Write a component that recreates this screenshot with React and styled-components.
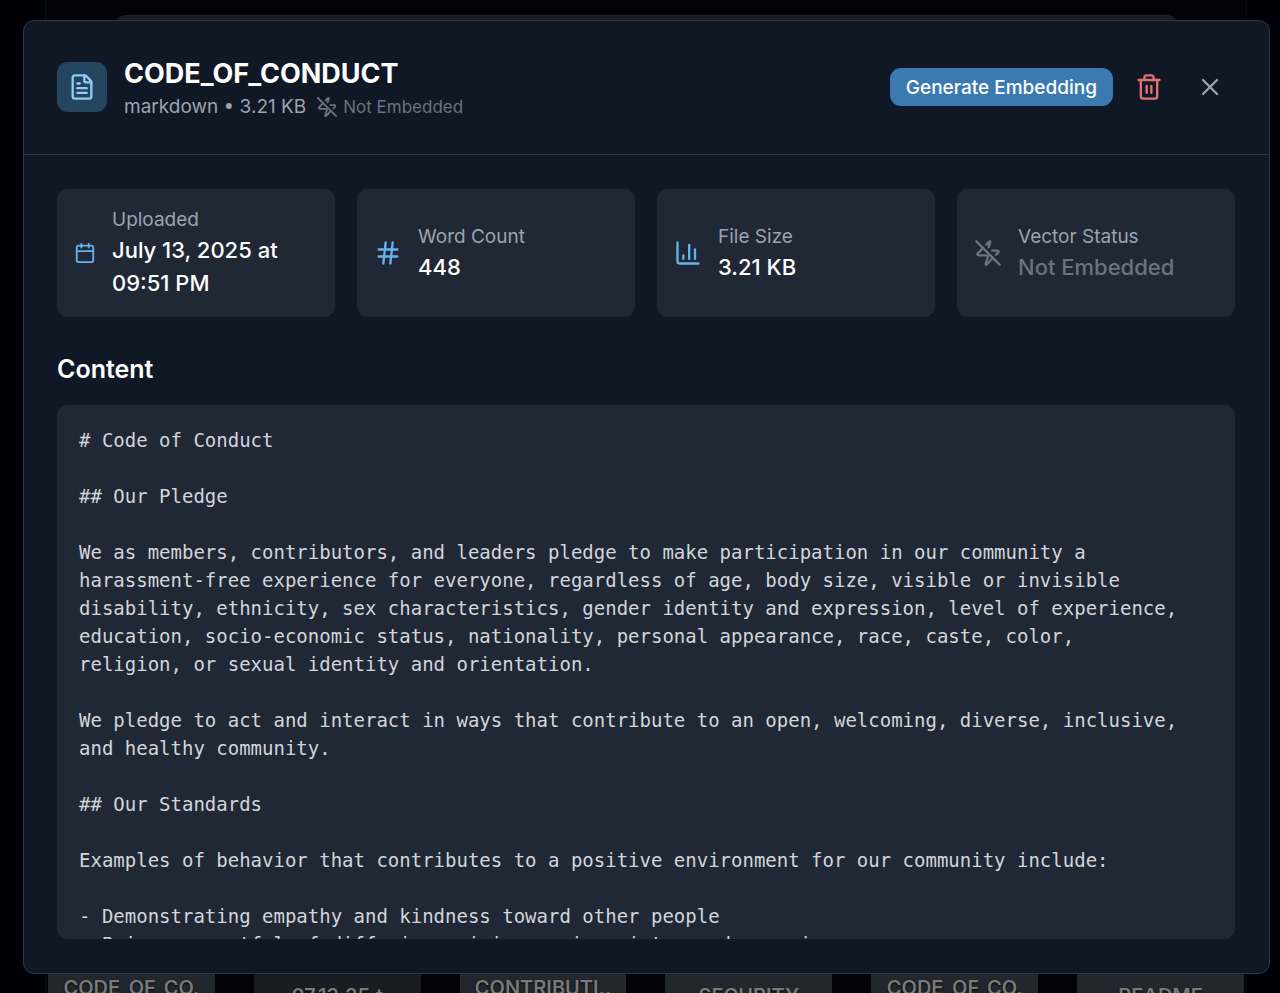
import React from "react";
import styled, { createGlobalStyle } from "styled-components";
import { FileText, ZapOff, Trash2, X, Calendar, Hash, ChartColumn } from "lucide-react";

const Global = createGlobalStyle`
  *, *::before, *::after { box-sizing: border-box; }
  body { margin: 0; background: #000009; color: #fff; font-family: Inter, "Liberation Sans", sans-serif; overflow: hidden; }
  h1, h2, p, pre, dl, dt, dd { margin: 0; }
  button { font: inherit; border: 0; cursor: pointer; }
`;

const Page = styled.main`
  display: flex;
  flex-direction: column;
  justify-content: space-between;
  height: 100vh;
  margin: 0 33px 0 45px;
  padding: 15px 2px 0;
  background: #030109;
  border: solid #0b0a12;
  border-width: 0 1px;
`;

const SearchPanel = styled.div`
  height: 60px;
  margin: 0 66px;
  border: 1px solid #202128;
  border-radius: 11px;
  background: #1a1b21;
`;

const Shelf = styled.div`
  display: grid;
  grid-template-columns: repeat(6, 1fr);
  gap: 39px;
  height: 60px;
`;

const Book = styled.div`
  display: flex;
  align-items: flex-start;
  justify-content: center;
  padding-top: ${(p) => (p.$low ? 53 : 45)}px;
  overflow: hidden;
  background: ${(p) => (p.$dim ? "#191c23" : "#23262d")};
  color: #797979;
  font-size: 20px;
  font-weight: 600;
  line-height: 20px;
  text-shadow: 0 1px 2px #000;
  white-space: nowrap;
`;

const Overlay = styled.div`
  position: fixed;
  inset: 0;
  padding: 20px 10px 19px 23px;
`;

const Dialog = styled.section`
  display: flex;
  flex-direction: column;
  height: 100%;
  border: 1px solid #2f3644;
  border-radius: 11px;
  background: #111825;
`;

const Header = styled.header`
  display: flex;
  align-items: center;
  gap: 17px;
  padding: 30px 34px 31px 33px;
  flex: none;
  border-bottom: 1px solid #2f3644;
`;

const FileBadge = styled.div`
  display: grid;
  place-items: center;
  width: 50px;
  height: 50px;
  border-radius: 11px;
  background: #23455f;
  color: #90cdf4;
`;

const Heading = styled.div`
  flex: 1;
  padding-top: 6px;
`;

const Title = styled.h1`
  font-size: 27px;
  font-weight: 700;
  line-height: 34px;
`;

const Meta = styled.p`
  display: flex;
  align-items: center;
  gap: 10px;
  color: #9ca3af;
  font-size: 19px;
  line-height: 32px;
`;

const Status = styled.span`
  display: flex;
  align-items: center;
  gap: 5px;
  color: #6b7280;
  font-size: 17px;
`;

const Actions = styled.div`
  display: flex;
  align-items: center;
  gap: 11px;
`;

const PrimaryButton = styled.button`
  height: 38px;
  padding: 0 16px;
  border-radius: 11px;
  background: #3a7ab1;
  color: #fff;
  font-size: 19px;
  font-weight: 500;
`;

const IconButton = styled.button`
  display: grid;
  place-items: center;
  width: 50px;
  height: 50px;
  padding: 0;
  background: transparent;
  color: ${(p) => (p.$danger ? "#e5706f" : "#9ca3af")};
`;

const Body = styled.div`
  display: flex;
  flex: 1;
  flex-direction: column;
  min-height: 0;
  padding: 34px 34px 34px 33px;
`;

const Stats = styled.dl`
  display: grid;
  grid-template-columns: repeat(4, 1fr);
  gap: 22px;
`;

const Stat = styled.div`
  display: flex;
  align-items: center;
  gap: 16px;
  min-height: 128px;
  padding: 0 17px;
  border-radius: 11px;
  background: #212835;
  color: ${(p) => (p.$muted ? "#6b7280" : "#63b3ed")};

  svg { flex: none; }
`;

const StatLabel = styled.dt`
  color: #9ca3af;
  font-size: 19px;
  line-height: 28px;
`;

const StatValue = styled.dd`
  color: ${(p) => (p.$muted ? "#6b7280" : "#fff")};
  font-size: 22px;
  font-weight: 500;
  line-height: 33px;
`;

const SectionTitle = styled.h2`
  margin: 33px 0 17px;
  font-size: 25px;
  font-weight: 600;
  line-height: 38px;
`;

const Source = styled.pre`
  flex: 1;
  min-height: 0;
  overflow: hidden;
  padding: 21px 22px;
  border-radius: 11px;
  background: #212835;
  color: #d1d5db;
  font-family: "DejaVu Sans Mono", "Liberation Mono", monospace;
  font-size: 19px;
  line-height: 28px;
`;

const books = [
  { name: "CODE_OF_CO." },
  { name: "07.13.25.t", dim: true, low: true },
  { name: "CONTRIBUTI.." },
  { name: "SECURITY", low: true },
  { name: "CODE_OF_CO." },
  { name: "README", low: true },
];

const stats = [
  { label: "Uploaded", value: "July 13, 2025 at 09:51 PM", icon: Calendar, size: 22 },
  { label: "Word Count", value: "448", icon: Hash, size: 28 },
  { label: "File Size", value: "3.21 KB", icon: ChartColumn, size: 28 },
  { label: "Vector Status", value: "Not Embedded", icon: ZapOff, size: 28, muted: true },
];

const source = `# Code of Conduct

## Our Pledge

We as members, contributors, and leaders pledge to make participation in our community a
harassment-free experience for everyone, regardless of age, body size, visible or invisible
disability, ethnicity, sex characteristics, gender identity and expression, level of experience,
education, socio-economic status, nationality, personal appearance, race, caste, color,
religion, or sexual identity and orientation.

We pledge to act and interact in ways that contribute to an open, welcoming, diverse, inclusive,
and healthy community.

## Our Standards

Examples of behavior that contributes to a positive environment for our community include:

- Demonstrating empathy and kindness toward other people
- Being respectful of differing opinions, viewpoints, and experiences`;

export default function App() {
  return (
    <>
      <Global />
      <Page aria-hidden="true">
        <SearchPanel />
        <Shelf>
          {books.map((b, i) => (
            <Book key={i} $low={b.low} $dim={b.dim}>{b.name}</Book>
          ))}
        </Shelf>
      </Page>
      <Overlay>
        <Dialog role="dialog" aria-labelledby="doc-title">
          <Header>
            <FileBadge><FileText size={28} /></FileBadge>
            <Heading>
              <Title id="doc-title">CODE_OF_CONDUCT</Title>
              <Meta>
                <span>markdown • 3.21 KB</span>
                <Status><ZapOff size={22} />Not Embedded</Status>
              </Meta>
            </Heading>
            <Actions>
              <PrimaryButton type="button">Generate Embedding</PrimaryButton>
              <IconButton type="button" $danger aria-label="Delete document"><Trash2 size={28} /></IconButton>
              <IconButton type="button" aria-label="Close"><X size={28} /></IconButton>
            </Actions>
          </Header>
          <Body>
            <Stats>
              {stats.map(({ label, value, icon: Icon, size, muted }) => (
                <Stat key={label} $muted={muted}>
                  <Icon size={size} />
                  <div>
                    <StatLabel>{label}</StatLabel>
                    <StatValue $muted={muted}>{value}</StatValue>
                  </div>
                </Stat>
              ))}
            </Stats>
            <SectionTitle>Content</SectionTitle>
            <Source>{source}</Source>
          </Body>
        </Dialog>
      </Overlay>
    </>
  );
}
